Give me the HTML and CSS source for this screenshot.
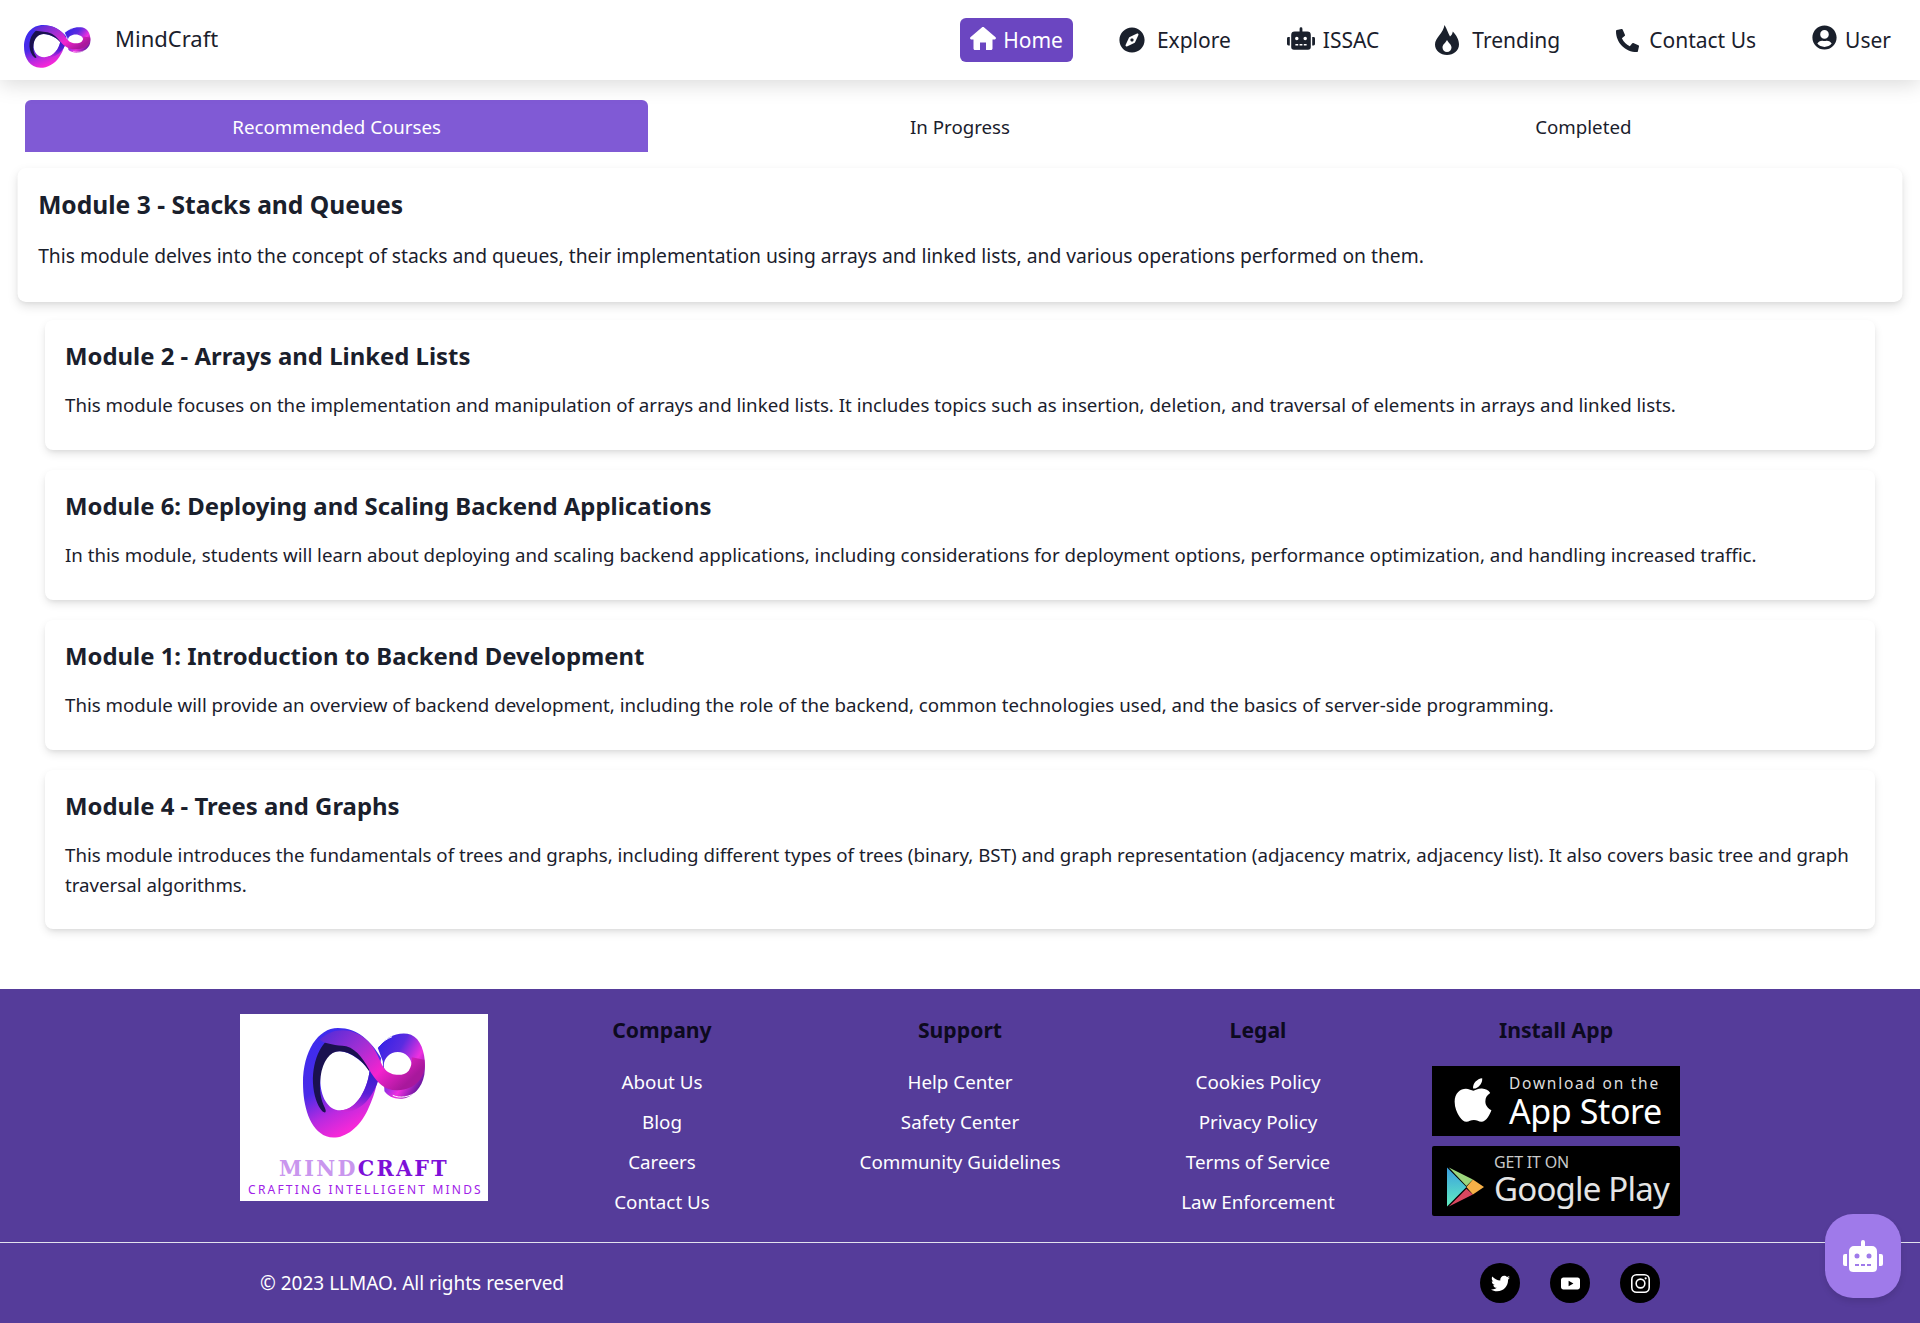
FILE: index.html
```html
<!DOCTYPE html>
<html lang="en">
<head>
<meta charset="utf-8">
<title>MindCraft</title>
<link rel="stylesheet" href="styles.css">
</head>
<body>
<svg class="defs" width="0" height="0" aria-hidden="true">
  <defs>
    <linearGradient id="lg1" x1="0" y1="0" x2="0.4" y2="1">
      <stop offset="0" stop-color="#3a2cf0"/><stop offset="0.55" stop-color="#4a2be8"/><stop offset="0.8" stop-color="#b92ae0"/><stop offset="1" stop-color="#f528d8"/>
    </linearGradient>
    <linearGradient id="lg2" x1="0" y1="0" x2="1" y2="0.6">
      <stop offset="0" stop-color="#4b2cd8"/><stop offset="0.4" stop-color="#a02fd4"/><stop offset="0.72" stop-color="#f423cf"/><stop offset="1" stop-color="#a8189c"/>
    </linearGradient>
    <linearGradient id="lg3" x1="0" y1="0" x2="1" y2="0.8">
      <stop offset="0" stop-color="#2a20e8"/><stop offset="0.4" stop-color="#5a2ce0"/><stop offset="0.7" stop-color="#f030e0"/><stop offset="1" stop-color="#4a1090"/>
    </linearGradient>
    <linearGradient id="lg4" x1="0" y1="0" x2="0" y2="1">
      <stop offset="0" stop-color="#2a1cc8"/><stop offset="0.6" stop-color="#5a1fd8"/><stop offset="1" stop-color="#d028d8"/>
    </linearGradient>
    <linearGradient id="lgplay" x1="0" y1="0" x2="0" y2="1">
      <stop offset="0" stop-color="#3a9fe0"/><stop offset="1" stop-color="#62eec0"/>
    </linearGradient>
    <symbol id="infinity" viewBox="0 0 370 330" preserveAspectRatio="none">
      <path fill="url(#lg3)" fill-rule="evenodd" d="M225 60C245 28 290 8 325 20C360 35 372 90 365 140C358 180 330 208 298 212C275 214 255 205 245 190L240 100ZM285 72C262 72 243 90 243 112C243 134 262 152 285 152C308 152 327 134 327 112C327 90 308 72 285 72Z"/>
      <path fill="url(#lg1)" fill-rule="evenodd" d="M105 0C165 0 205 40 235 90C228 140 222 190 195 245C165 310 110 340 70 325C20 305 0 235 0 165C0 70 45 0 105 0ZM105 70C140 68 180 100 200 130C195 175 165 247 112 247C75 247 52 205 52 155C52 110 72 72 105 70Z"/>
      <path fill="#1a1150" d="M100 22C60 32 28 90 30 165C32 200 42 232 58 250C66 256 72 254 66 240C52 212 48 185 53 145C60 100 80 70 110 70C145 70 180 100 198 128L222 95C190 50 150 12 100 22Z"/>
      <path fill="url(#lg4)" d="M200 130C195 175 165 247 112 247C135 262 175 240 195 215C215 190 225 165 232 140L212 115Z"/>
      <path fill="url(#lg2)" d="M50 35C90 -5 160 -5 205 50C225 75 233 108 248 125C264 142 300 148 318 128C328 113 328 98 327 88L365 95C372 140 345 185 285 187C245 188 225 165 205 135C185 100 165 65 130 55C100 50 70 50 50 35Z"/>
      <path class="logo-gap" d="M228 55C240 40 252 32 268 26M270 202C290 212 320 208 345 190"/>
    </symbol>
    <symbol id="i-robot" viewBox="0 0 640 512"><path d="M32,224H64V416H32A31.96166,31.96166,0,0,1,0,384V256A31.96166,31.96166,0,0,1,32,224Zm512-48V448a64.06328,64.06328,0,0,1-64,64H160a64.06328,64.06328,0,0,1-64-64V176a79.974,79.974,0,0,1,80-80H288V32a32,32,0,0,1,64,0V96H464A79.974,79.974,0,0,1,544,176ZM264,256a40,40,0,1,0-40,40A39.997,39.997,0,0,0,264,256Zm-8,128H192v32h64Zm96,0H288v32h64ZM456,256a40,40,0,1,0-40,40A39.997,39.997,0,0,0,456,256Zm-8,128H384v32h64ZM640,256V384a31.96166,31.96166,0,0,1-32,32H576V224h32A31.96166,31.96166,0,0,1,640,256Z"/></symbol>
  </defs>
</svg>

<header class="topbar">
  <a class="brand" href="#">
    <svg class="brand-mark"><use href="#infinity"/></svg>
    <span class="brand-name">MindCraft</span>
  </a>
  <nav class="nav">
    <a class="nav-item nav-item-active" href="#">
      <svg class="ico ico-home" viewBox="0 0 26 23"><path d="M11.800 .5C12.500 -.1 13.500 -.1 14.200 .5L25.600 10.300C26.300 11 25.800 12.400 24.800 12.400H22.500V21.500C22.500 22.400 21.900 23 21 23H16V15.500H10V23H5C4.100 23 3.500 22.400 3.500 21.500V12.400H1.200C.2 12.400 -.3 11 .4 10.300Z"/></svg>
      <span>Home</span>
    </a>
    <a class="nav-item" href="#">
      <svg class="ico ico-compass" viewBox="0 0 496 512"><path d="M225.38 233.37c-12.5 12.5-12.5 32.76 0 45.25 12.49 12.5 32.76 12.5 45.25 0 12.5-12.5 12.5-32.76 0-45.25-12.5-12.49-32.76-12.49-45.25 0zM248 8C111.03 8 0 119.03 0 256s111.03 248 248 248 248-111.03 248-248S384.97 8 248 8zm126.14 148.05L308.17 300.4a31.938 31.938 0 0 1-15.77 15.77l-144.34 65.97c-16.65 7.61-33.81-9.55-26.2-26.2l65.98-144.35a31.938 31.938 0 0 1 15.77-15.77l144.34-65.97c16.65-7.6 33.8 9.55 26.19 26.2z"/></svg>
      <span>Explore</span>
    </a>
    <a class="nav-item" href="#">
      <svg class="ico ico-robot"><use href="#i-robot"/></svg>
      <span>ISSAC</span>
    </a>
    <a class="nav-item" href="#">
      <svg class="ico ico-fire" viewBox="0 0 24 30"><path fill-rule="evenodd" d="M9.500 0C12 4 13 8 15 11.500C16.500 10.500 17.500 8.500 17.800 6.500C21.500 10 24 15 24 19.500C24 25.500 18.500 30 12 30C5.500 30 0 25.500 0 19.500C0 13 8.500 8 9.500 0ZM12 15C10.500 18 7.500 19.500 7.500 22.500C7.500 25 9.500 27 12 27C14.500 27 16.500 25 16.500 22.500C16.500 19.500 13.500 18 12 15Z"/></svg>
      <span>Trending</span>
    </a>
    <a class="nav-item" href="#">
      <svg class="ico ico-phone" viewBox="0 0 512 512"><path d="M497.39 361.8l-112-48a24 24 0 0 0-28 6.900l-49.600 60.600A370.660 370.660 0 0 1 130.600 204.110l60.600-49.600a23.940 23.940 0 0 0 6.900-28l-48-112A24.160 24.160 0 0 0 122.600.61l-104 24A24 24 0 0 0 0 48c0 256.500 207.900 464 464 464a24 24 0 0 0 23.400-18.600l24-104a24.290 24.290 0 0 0-14.010-27.600z"/></svg>
      <span>Contact Us</span>
    </a>
    <a class="nav-item" href="#">
      <svg class="ico ico-user" viewBox="0 0 496 512"><path d="M248 8C111 8 0 119 0 256s111 248 248 248 248-111 248-248S385 8 248 8zm0 96c48.600 0 88 39.400 88 88s-39.400 88-88 88-88-39.400-88-88 39.400-88 88-88zm0 344c-58.700 0-111.300-26.600-146.500-68.200 18.800-35.400 55.600-59.800 98.500-59.800 2.400 0 4.800.4 7.100 1.100 13 4.200 26.600 6.900 40.900 6.900 14.300 0 28-2.700 40.900-6.900 2.300-.7 4.700-1.100 7.100-1.100 42.900 0 79.700 24.400 98.500 59.800C359.300 421.400 306.700 448 248 448z"/></svg>
      <span>User</span>
    </a>
  </nav>
</header>

<main class="content">
  <div class="tabs">
    <button class="tab tab-active">Recommended Courses</button>
    <button class="tab">In Progress</button>
    <button class="tab">Completed</button>
  </div>
  <section class="cards">
    <article class="card card-hover">
      <h2 class="card-title">Module 3 - Stacks and Queues</h2>
      <p class="card-text">This module delves into the concept of stacks and queues, their implementation using arrays and linked lists, and various operations performed on them.</p>
    </article>
    <article class="card">
      <h2 class="card-title">Module 2 - Arrays and Linked Lists</h2>
      <p class="card-text">This module focuses on the implementation and manipulation of arrays and linked lists. It includes topics such as insertion, deletion, and traversal of elements in arrays and linked lists.</p>
    </article>
    <article class="card">
      <h2 class="card-title">Module 6: Deploying and Scaling Backend Applications</h2>
      <p class="card-text">In this module, students will learn about deploying and scaling backend applications, including considerations for deployment options, performance optimization, and handling increased traffic.</p>
    </article>
    <article class="card">
      <h2 class="card-title">Module 1: Introduction to Backend Development</h2>
      <p class="card-text">This module will provide an overview of backend development, including the role of the backend, common technologies used, and the basics of server-side programming.</p>
    </article>
    <article class="card">
      <h2 class="card-title">Module 4 - Trees and Graphs</h2>
      <p class="card-text">This module introduces the fundamentals of trees and graphs, including different types of trees (binary, BST) and graph representation (adjacency matrix, adjacency list). It also covers basic tree and graph traversal algorithms.</p>
    </article>
  </section>
</main>

<footer class="footer">
  <div class="footer-grid">
    <div class="footer-logo-col">
      <div class="footer-logo">
        <svg class="footer-mark"><use href="#infinity"/></svg>
        <div class="logo-word"><span class="logo-word-light">MIND</span><span class="logo-word-dark">CRAFT</span></div>
        <div class="logo-tag">CRAFTING INTELLIGENT MINDS</div>
      </div>
    </div>
    <div class="footer-col">
      <h3 class="footer-head">Company</h3>
      <a class="footer-link" href="#">About Us</a>
      <a class="footer-link" href="#">Blog</a>
      <a class="footer-link" href="#">Careers</a>
      <a class="footer-link" href="#">Contact Us</a>
    </div>
    <div class="footer-col">
      <h3 class="footer-head">Support</h3>
      <a class="footer-link" href="#">Help Center</a>
      <a class="footer-link" href="#">Safety Center</a>
      <a class="footer-link" href="#">Community Guidelines</a>
    </div>
    <div class="footer-col">
      <h3 class="footer-head">Legal</h3>
      <a class="footer-link" href="#">Cookies Policy</a>
      <a class="footer-link" href="#">Privacy Policy</a>
      <a class="footer-link" href="#">Terms of Service</a>
      <a class="footer-link" href="#">Law Enforcement</a>
    </div>
    <div class="footer-col">
      <h3 class="footer-head footer-head-app">Install App</h3>
      <a class="badge" href="#">
        <svg class="badge-apple" viewBox="0 0 384 512"><path d="M318.700 268.700c-.2-36.700 16.400-64.400 50-84.800-18.800-26.900-47.200-41.700-84.700-44.600-35.500-2.800-74.300 20.700-88.500 20.700-15 0-49.400-19.700-76.400-19.700C63.300 141.200 4 184.800 4 273.500q0 39.300 14.400 81.200c12.800 36.700 59 126.700 107.200 125.200 25.200-.6 43-17.900 75.800-17.900 31.800 0 48.300 17.900 76.400 17.900 48.600-.7 90.400-82.500 102.600-119.300-65.200-30.700-61.700-90-61.700-91.900zm-56.600-164.200c27.300-32.400 24.800-61.900 24-72.500-24.100 1.400-52 16.400-67.900 34.900-17.500 19.800-27.800 44.300-25.600 71.900 26.100 2 49.900-11.400 69.500-34.300z"/></svg>
        <span class="badge-text badge-text-apple">
          <span class="badge-small-apple">Download on the</span>
          <span class="badge-big-apple">App Store</span>
        </span>
      </a>
      <a class="badge badge-play" href="#">
        <svg class="badge-gplay" viewBox="0 0 40 42">
          <path fill="url(#lgplay)" d="M0 0L21 21L0 42Z"/>
          <path fill="#d8475f" d="M2 42L21 23L28 29Z"/>
          <path fill="#9cd67c" d="M2 0L28 13L21 20Z"/>
          <path fill="#f7b048" d="M28 13L40 21L28 29L21 21Z"/>
        </svg>
        <span class="badge-text badge-text-play">
          <span class="badge-small-play">GET IT ON</span>
          <span class="badge-big-play">Google Play</span>
        </span>
      </a>
    </div>
  </div>
  <div class="footer-bottom">
    <div class="footer-bottom-inner">
      <span class="copyright">© 2023 LLMAO. All rights reserved</span>
      <div class="socials">
        <a class="social" href="#" aria-label="Twitter"><svg class="social-ico" viewBox="0 0 512 512"><path d="M459.370 151.716c.325 4.548.325 9.097.325 13.645 0 138.720-105.583 298.558-298.558 298.558-59.452 0-114.680-17.219-161.137-47.106 8.447.974 16.568 1.299 25.340 1.299 49.055 0 94.213-16.568 130.274-44.832-46.132-.975-84.792-31.188-98.112-72.772 6.498.974 12.995 1.624 19.818 1.624 9.421 0 18.843-1.300 27.614-3.573-48.081-9.747-84.143-51.980-84.143-102.985v-1.299c13.969 7.797 30.214 12.670 47.431 13.319-28.264-18.843-46.781-51.005-46.781-87.391 0-19.492 5.197-37.360 14.294-52.954 51.655 63.675 129.300 105.258 216.365 109.807-1.624-7.797-2.599-15.918-2.599-24.040 0-57.828 46.782-104.934 104.934-104.934 30.213 0 57.502 12.670 76.670 33.137 23.715-4.548 46.456-13.320 66.599-25.340-7.798 24.366-24.366 44.833-46.132 57.827 21.117-2.273 41.584-8.122 60.426-16.243-14.292 20.791-32.161 39.308-52.628 54.253z"/></svg></a>
        <a class="social" href="#" aria-label="YouTube"><svg class="social-ico" viewBox="0 0 24 24"><path fill-rule="evenodd" d="M3 4.500H21C22.700 4.500 24 5.800 24 7.500V16.500C24 18.200 22.700 19.500 21 19.500H3C1.300 19.500 0 18.200 0 16.500V7.500C0 5.800 1.300 4.500 3 4.500ZM9.600 8.500V15.500L15.700 12Z"/></svg></a>
        <a class="social" href="#" aria-label="Instagram"><svg class="social-ico" viewBox="0 0 24 24"><rect class="insta" x="1" y="1" width="22" height="22" rx="6"/><circle class="insta" cx="12" cy="12" r="5.500"/><circle cx="18.500" cy="5.500" r="1.400"/></svg></a>
      </div>
    </div>
  </div>
  <button class="chat-fab" aria-label="Chat"><svg class="chat-ico"><use href="#i-robot"/></svg></button>
</footer>
</body>
</html>
```

FILE: styles.css
```css
* { box-sizing: border-box; }
html, body { margin: 0; padding: 0; }
body {
  font-family: "Noto Sans", "Open Sans", sans-serif;
  color: #1a202c;
  background: #fff;
}
a { color: inherit; text-decoration: none; }
.defs { position: absolute; }
.logo-gap { fill: none; stroke: #fff; stroke-width: 3; }

.topbar {
  height: 80px;
  display: flex;
  align-items: center;
  justify-content: space-between;
  padding: 0 19px 0 24px;
  background: #fff;
  box-shadow: 0 4px 20px rgba(0, 0, 0, .15);
  position: relative;
}
.brand { display: flex; align-items: center; height: 80px; }
.brand-mark { width: 67px; height: 43px; margin-top: 12px; }
.brand-name { margin-left: 24px; margin-top: -4px; font-size: 22px; }
.nav { display: flex; align-items: center; gap: 36px; }
.nav-item {
  display: flex;
  align-items: center;
  height: 44px;
  padding: 0 10px;
  font-size: 21px;
  fill: #1a202c;
}
.nav-item-active {
  background: #6b46c1;
  color: #fff;
  fill: #fff;
  border-radius: 6px;
}
.ico { display: block; }
.ico-home { width: 26px; height: 23px; margin: -4px 7px 0 0; }
.ico-compass { width: 26px; height: 26px; margin-right: 12px; }
.ico-robot { width: 28px; height: 23px; margin: -3px 8px 0 0; }
.ico-fire { width: 24px; height: 30px; margin-right: 13px; }
.ico-phone { width: 23px; height: 23px; margin-right: 10px; }
.ico-user { width: 25px; height: 25px; margin: -5px 8px 0 0; }

.content { padding: 20px 25px 60px; }
.tabs { display: grid; grid-template-columns: repeat(3, 1fr); }
.tab {
  height: 52px;
  border: 0;
  background: transparent;
  font: inherit;
  font-size: 18.700px;
  color: #1a202c;
  border-radius: 6px 6px 0 0;
}
.tab-active { background: #805ad5; color: #fff; }

.cards { display: flex; flex-direction: column; gap: 20px; padding: 18px 20px 0; }
.card {
  background: #fff;
  border-radius: 8px;
  box-shadow: 0 4px 10px -1px rgba(0, 0, 0, .13), 0 2px 4px -1px rgba(0, 0, 0, .05);
  padding: 21px 20px 30px;
}
.card:last-child { padding-bottom: 29px; }
.card-hover { transform: scale(1.03); }
.card-title { margin: 0 0 19px; font-size: 23.900px; line-height: 30px; font-weight: 700; }
.card-text { margin: 0; font-size: 18.700px; line-height: 30px; color: #1a202c; }

.footer { background: #553c9a; position: relative; height: 334px; color: #fff; }
.footer-grid {
  display: grid;
  grid-template-columns: repeat(5, 298px);
  justify-content: center;
  padding-top: 25px;
  height: 253px;
}
.footer-logo-col { display: flex; justify-content: center; }
.footer-logo {
  width: 248px;
  height: 187px;
  background: #fff;
  display: flex;
  flex-direction: column;
  align-items: center;
}
.footer-mark { width: 123px; height: 110px; margin-top: 14px; flex: none; }
.logo-word {
  font-family: "DejaVu Serif Condensed", "DejaVu Serif", serif;
  font-weight: 700;
  font-size: 23px;
  letter-spacing: 2.300px;
  line-height: 24px;
  margin-top: 18px;
}
.logo-word-light { color: #c996ee; }
.logo-word-dark { color: #7d10d8; }
.logo-tag { font-size: 12px; letter-spacing: 2.200px; color: #a020e8; line-height: 14px; margin-top: 3px; white-space: nowrap; padding-left: 3px; }

.footer-col { display: flex; flex-direction: column; align-items: center; padding-top: 1px; }
.footer-head { margin: 0 0 22px; font-size: 21.200px; line-height: 30px; font-weight: 700; color: #0d0a1f; }
.footer-head-app { margin-bottom: 21px; }
.footer-link { font-size: 18.800px; line-height: 30px; margin-bottom: 10px; white-space: nowrap; }
.badge {
  width: 248px;
  height: 70px;
  flex: none;
  background: #000;
  display: flex;
  align-items: center;
  margin-bottom: 10px;
  padding-left: 21px;
  color: #fff;
}
.badge-play { padding-left: 15px; border-radius: 2px; }
.badge-apple { width: 40px; height: 50px; fill: #fff; flex: none; margin-top: -2px; }
.badge-gplay { width: 37px; height: 40px; margin-top: 12px; flex: none; }
.badge-text { display: flex; flex-direction: column; white-space: nowrap; }
.badge-text-apple { margin-left: 16px; }
.badge-text-play { margin-left: 10px; margin-top: -3px; }
.badge-small-apple { font-size: 15.500px; letter-spacing: 1.750px; line-height: 20px; color: #ddd; }
.badge-big-apple { font-size: 34px; line-height: 36px; letter-spacing: -.4px; }
.badge-small-play { font-size: 16px; line-height: 18px; color: #c9c9c9; letter-spacing: -.2px; }
.badge-big-play { font-size: 33px; line-height: 36px; color: #e4e4e4; letter-spacing: -.8px; }

.footer-bottom { border-top: 1px solid #e2e2ee; height: 81px; }
.footer-bottom-inner { width: 1400px; margin: 0 auto; height: 80px; display: flex; align-items: center; justify-content: space-between; }
.copyright { font-size: 19px; }
.socials { display: flex; gap: 30px; }
.social { width: 40px; height: 40px; border-radius: 50%; background: #000; display: flex; align-items: center; justify-content: center; fill: #fff; }
.social-ico { width: 19px; height: 19px; display: block; }
.insta { fill: none; stroke: #fff; stroke-width: 2; }
.chat-fab {
  position: absolute;
  right: 19px;
  bottom: 25px;
  width: 76px;
  height: 84px;
  border: 0;
  border-radius: 28px;
  background: #9f7aea;
  fill: #fff;
  box-shadow: 0 4px 6px rgba(0, 0, 0, .1);
  display: flex;
  align-items: center;
  justify-content: center;
}
.chat-ico { width: 40px; height: 32px; }
```
